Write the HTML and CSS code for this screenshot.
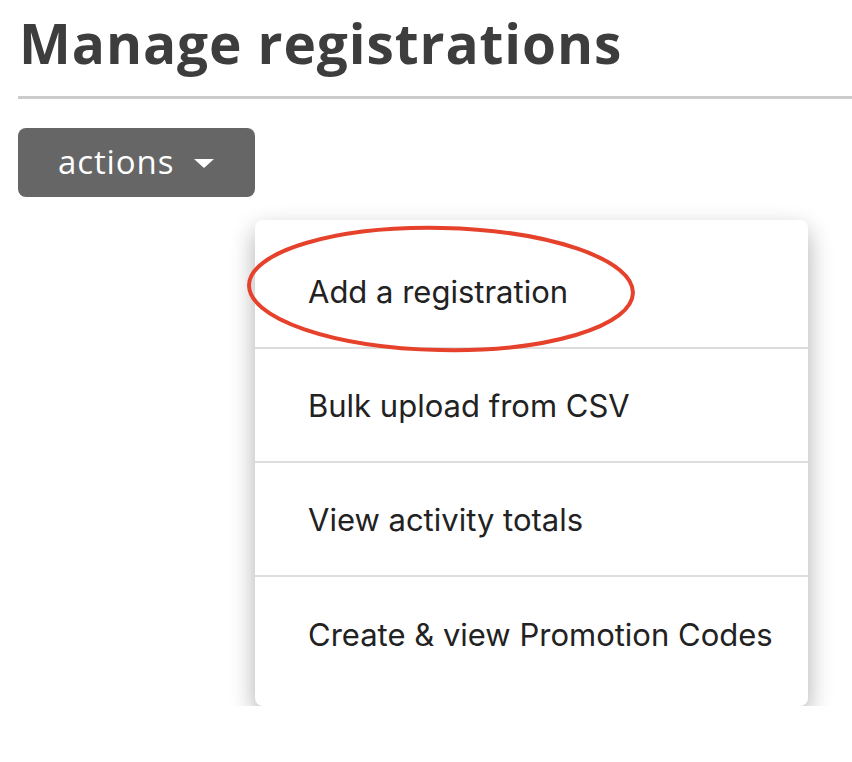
FILE: index.html
```html
<!DOCTYPE html>
<html>
<head>
<meta charset="utf-8">
<link rel="stylesheet" href="styles.css">
</head>
<body>
<div class="page">
  <h1 class="title">Manage registrations</h1>
  <button class="actions"><span class="label">actions</span><span class="caret"></span></button>
  <div class="menu">
    <div class="item">Add a registration</div>
    <div class="item">Bulk upload from CSV</div>
    <div class="item">View activity totals</div>
    <div class="item last">Create &amp; view Promotion Codes</div>
    <svg class="circle" width="420" height="140" viewBox="0 0 420 140">
      <ellipse cx="201" cy="69" rx="192" ry="61" fill="none" stroke="#e5412b" stroke-width="4" transform="rotate(1.2 201 69)"/>
    </svg>
  </div>
</div>
</body>
</html>
```
FILE: styles.css
```css
html, body {
  margin: 0;
  padding: 0;
  background: #fff;
}
.page {
  padding-left: 18px;
}
.title {
  margin: 0;
  padding: 9px 0 20px 1px;
  font-family: "Open Sans", "Liberation Sans", sans-serif;
  font-weight: 700;
  font-size: 55px;
  line-height: 67px;
  letter-spacing: 0.9px;
  color: #3d3d3d;
  border-bottom: 3px solid #cccccc;
}
.actions {
  display: flex;
  align-items: center;
  gap: 20px;
  margin-top: 29px;
  width: 237px;
  height: 69px;
  padding: 0 0 0 40px;
  border: none;
  border-radius: 8px;
  background: #666666;
  color: #fff;
  font-family: "Open Sans", "Liberation Sans", sans-serif;
  font-size: 33px;
  letter-spacing: 0.9px;
}
.label {
  line-height: 1;
  margin-top: -3px;
}
.caret {
  width: 0;
  height: 0;
  border-left: 10px solid transparent;
  border-right: 10px solid transparent;
  border-top: 9px solid #fff;
  margin-top: 2px;
}
.menu {
  position: relative;
  margin-top: 23px;
  margin-left: 237px;
  width: 553px;
  padding: 15px 0;
  background: #fff;
  border-radius: 8px;
  box-shadow: 0 10px 24px rgba(0, 0, 0, 0.32);
}
.item {
  height: 112px;
  display: flex;
  align-items: center;
  padding-left: 53px;
  border-bottom: 2px solid #dddddd;
  font-family: Inter, "Liberation Sans", sans-serif;
  font-size: 31px;
  color: #222;
}
.item.last {
  border-bottom: none;
  height: 114px;
}
.circle {
  position: absolute;
  left: -15px;
  top: 0;
  pointer-events: none;
}
```
